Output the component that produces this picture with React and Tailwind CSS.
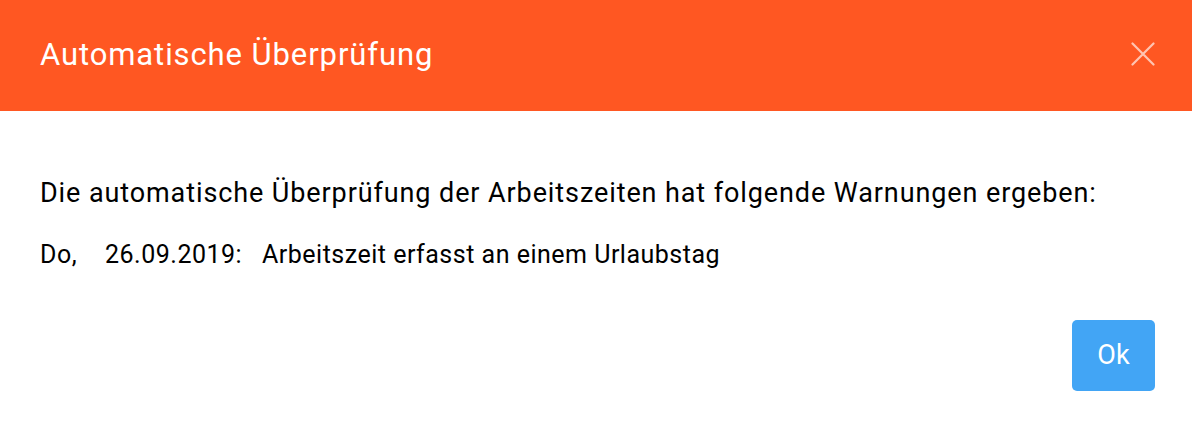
const warnings = [
  { day: 'Do,', date: '26.09.2019:', text: 'Arbeitszeit erfasst an einem Urlaubstag' },
]

export default function App() {
  return (
    <div className="w-[1192px] h-[432px] bg-white flex flex-col" style={{ fontFamily: 'Roboto, "Noto Sans", sans-serif' }}>
      <div className="h-[111px] bg-[#ff5722] flex items-center justify-between pl-10 pr-[37px]">
        <h2 className="text-[31px] tracking-[0.9px] text-white font-normal">Automatische Überprüfung</h2>
        <button className="text-white/65 mt-[-4px]">
          <svg width="24" height="24" viewBox="0 0 24 24" fill="none" stroke="currentColor" strokeWidth="2.2" strokeLinecap="round">
            <path d="M1.5 1.5 22.5 22.5M22.5 1.5 1.5 22.5" />
          </svg>
        </button>
      </div>

      <div className="px-10 pt-[64px]">
        <p className="text-[27px] tracking-[0.9px] text-black leading-[36px]">
          Die automatische Überprüfung der Arbeitszeiten hat folgende Warnungen ergeben:
        </p>
        {warnings.map((w, i) => (
          <div key={i} className="mt-[28px] flex text-[25px] tracking-[0.5px] text-black leading-[32px]">
            <span className="w-[65px]">{w.day}</span>
            <span className="w-[157px]">{w.date}</span>
            <span>{w.text}</span>
          </div>
        ))}
      </div>

      <div className="flex justify-end px-[37px] mt-auto mb-[41px]">
        <button className="w-[83px] h-[71px] rounded-[5px] bg-[#42a5f5] text-white text-[27px]">Ok</button>
      </div>
    </div>
  )
}
